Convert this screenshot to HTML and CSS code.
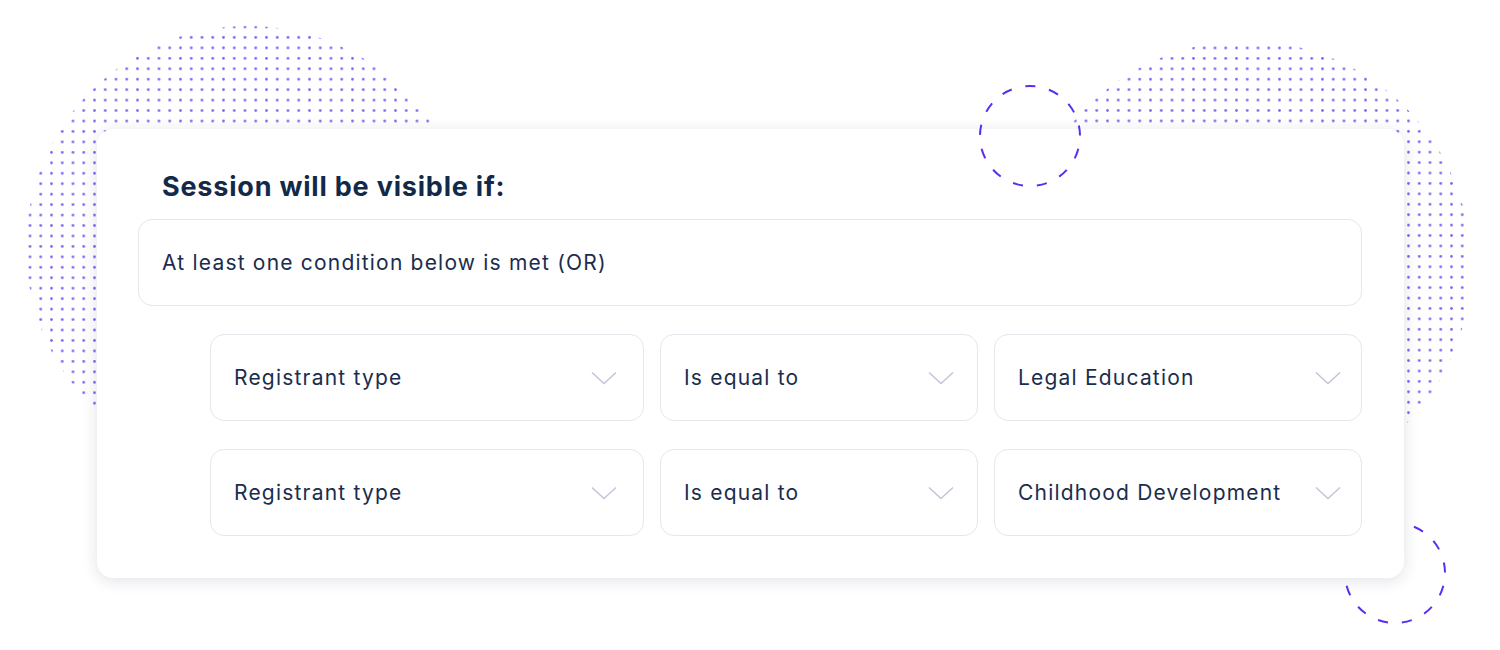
FILE: index.html
```html
<!DOCTYPE html>
<html lang="en">
<head>
<meta charset="utf-8">
<title>Session visibility</title>
<link rel="stylesheet" href="styles.css">
</head>
<body>
<div class="stage">
  <svg class="dots dots-left" width="444" height="444" viewBox="0 0 444 444">
    <defs>
      <pattern id="dotsL" patternUnits="userSpaceOnUse" x="-1.375" y="-4.225" width="10.75" height="10.45">
        <circle cx="5.375" cy="5.225" r="1.4" />
      </pattern>
    </defs>
    <circle cx="222" cy="222" r="222" fill="url(#dotsL)" />
  </svg>
  <svg class="dots dots-right" width="450" height="450" viewBox="0 0 450 450">
    <defs>
      <pattern id="dotsR" patternUnits="userSpaceOnUse" x="-4.875" y="1.79" width="10.75" height="10.42">
        <circle cx="5.375" cy="5.21" r="1.4" />
      </pattern>
    </defs>
    <circle cx="225" cy="225" r="225" fill="url(#dotsR)" />
  </svg>
  <svg class="ring ring-bottom" width="104" height="104" viewBox="0 0 104 104"><circle cx="52" cy="52" r="50" /></svg>

  <section class="card">
    <h2 class="card-title">Session will be visible if:</h2>
    <div class="mode-box">At least one condition below is met (OR)</div>
    <div class="rules">
      <div class="select select-field"><span>Registrant type</span><svg class="chev" width="26" height="14" viewBox="0 0 26 14"><polyline points="1,1.5 13,12.5 25,1.5"/></svg></div>
      <div class="select select-op"><span>Is equal to</span><svg class="chev" width="26" height="14" viewBox="0 0 26 14"><polyline points="1,1.5 13,12.5 25,1.5"/></svg></div>
      <div class="select select-value"><span>Legal Education</span><svg class="chev" width="26" height="14" viewBox="0 0 26 14"><polyline points="1,1.5 13,12.5 25,1.5"/></svg></div>
      <div class="select select-field"><span>Registrant type</span><svg class="chev" width="26" height="14" viewBox="0 0 26 14"><polyline points="1,1.5 13,12.5 25,1.5"/></svg></div>
      <div class="select select-op"><span>Is equal to</span><svg class="chev" width="26" height="14" viewBox="0 0 26 14"><polyline points="1,1.5 13,12.5 25,1.5"/></svg></div>
      <div class="select select-value"><span>Childhood Development</span><svg class="chev" width="26" height="14" viewBox="0 0 26 14"><polyline points="1,1.5 13,12.5 25,1.5"/></svg></div>
    </div>
  </section>

  <svg class="ring ring-top" width="104" height="104" viewBox="0 0 104 104"><circle cx="52" cy="52" r="50" /></svg>
</div>
</body>
</html>
```

FILE: styles.css
```css
* { box-sizing: border-box; }

html, body {
  margin: 0;
  padding: 0;
  background: #ffffff;
}

body {
  font-family: Inter, "Noto Sans", sans-serif;
  color: #1a2d4e;
}

.stage {
  position: relative;
  width: 1500px;
  height: 650px;
  overflow: hidden;
  padding-top: 129px;
  padding-left: 97px;
}

.dots {
  position: absolute;
  fill: #8463f4;
}

.dots-left {
  left: 26px;
  top: 26px;
}

.dots-right {
  left: 1021px;
  top: 41px;
}

.ring {
  position: absolute;
  fill: none;
  stroke: #5a2df0;
  stroke-width: 2;
  stroke-dasharray: 10.2 13.97;
  stroke-dashoffset: 11.2;
}

.ring-top {
  left: 978px;
  top: 84px;
  z-index: 2;
}

.ring-bottom {
  left: 1343px;
  top: 521px;
}

.card {
  position: relative;
  z-index: 1;
  width: 1307px;
  height: 449px;
  background: #ffffff;
  border-radius: 16px;
  box-shadow: 0 3px 16px rgba(20, 30, 60, 0.13);
  padding: 43px 42px 42px 41px;
}

.card-title {
  margin: 0 0 17px 0;
  padding-left: 24px;
  font-size: 27px;
  line-height: 30px;
  font-weight: 700;
  letter-spacing: 0.8px;
  color: #122949;
}

.mode-box {
  height: 87px;
  display: flex;
  align-items: center;
  padding: 0 23px;
  border: 1px solid #e6e6ec;
  border-radius: 14px;
  font-size: 21px;
  letter-spacing: 1.2px;
}

.rules {
  margin: 28px 0 0 72px;
  display: grid;
  grid-template-columns: 434px 318px 368px;
  column-gap: 16px;
  row-gap: 28px;
}

.select {
  height: 87px;
  display: flex;
  align-items: center;
  justify-content: space-between;
  padding: 0 24px 0 23px;
  border: 1px solid #e6e6ec;
  border-radius: 14px;
  font-size: 21px;
  letter-spacing: 1.2px;
}

.select-field { padding-right: 26px; }
.select-op { padding-right: 23px; }
.select-value { padding-right: 20px; }

.chev {
  fill: none;
  stroke: #c6c5d7;
  stroke-width: 1.6;
}
```
